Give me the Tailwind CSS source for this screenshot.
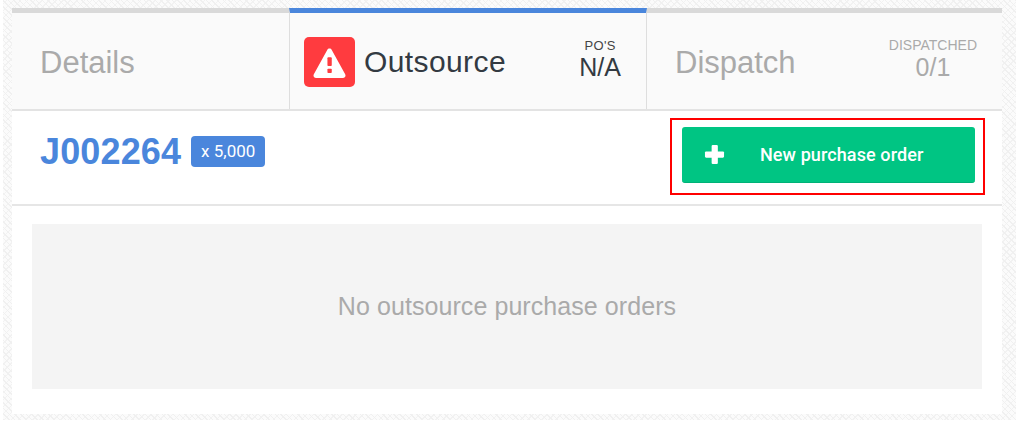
<!DOCTYPE html>
<html>
<head>
<meta charset="utf-8">
<script src="https://cdn.jsdelivr.net/npm/@tailwindcss/browser@4"></script>
</head>
<body class="bg-white font-['Liberation_Sans',Arial,sans-serif]">
<div class="w-[1016px] h-[431px] bg-white overflow-hidden">
  <div class="ml-[3px] h-[420px] pl-[9px] pr-[14px] pt-[8px] bg-[#fbfbfb] bg-[repeating-linear-gradient(45deg,#f0f0f0_0px,#f0f0f0_1px,transparent_1px,transparent_4px),repeating-linear-gradient(-45deg,#f2f2f2_0px,#f2f2f2_1px,transparent_1px,transparent_5px)]">
    <div class="w-[990px] h-[406px] bg-white flex flex-col">
      <div class="flex h-[103px] shrink-0 bg-[#fafafa] border-b-2 border-[#e3e3e3]">
        <div class="w-[277px] border-t-[5px] border-[#d9d9d9] flex items-center pl-[28px] pt-[5px] text-[31px] text-[#aaaaaa]">Details</div>
        <div class="w-[358px] border-t-[5px] border-t-[#4a86dc] border-x border-x-[#dedede] flex items-center pl-[14px] pr-[25px] pt-[1px]">
          <div class="w-[51px] h-[50px] mt-[1px] rounded-[5px] bg-[#ff3b3f] flex items-center justify-center">
            <svg viewBox="0 0 32 30" class="w-[33px] h-[31px]"><path d="M16 1.500c.9 0 1.700.5 2.200 1.300l13 23.600c.9 1.700-.2 3.600-2.200 3.600H3c-2 0-3.100-1.900-2.200-3.600l13-23.600c.5-.8 1.300-1.300 2.200-1.300z" fill="#fff"/><rect x="14" y="10" width="4.200" height="8.500" rx=".8" fill="#ff3b3f"/><rect x="14" y="21" width="4.200" height="4.200" rx=".8" fill="#ff3b3f"/></svg>
          </div>
          <div class="ml-[9px] text-[30px] text-[#333a42] tracking-[0.4px]">Outsource</div>
          <div class="ml-auto flex flex-col items-center mb-[2px]">
            <div class="text-[13px] leading-[13px] tracking-[0.3px] text-[#444444]">PO'S</div>
            <div class="text-[25px] leading-[30px] text-[#333a42]">N/A</div>
          </div>
        </div>
        <div class="w-[355px] border-t-[5px] border-[#d9d9d9] flex items-center pl-[28px] pr-[25px] pt-[1px]">
          <div class="text-[31px] text-[#aaaaaa] mt-[3px]">Dispatch</div>
          <div class="ml-auto flex flex-col items-center mb-[2px]">
            <div class="text-[14px] leading-[13px] text-[#aaaaaa]">DISPATCHED</div>
            <div class="text-[25px] leading-[30px] text-[#aaaaaa]">0/1</div>
          </div>
        </div>
      </div>
      <div class="flex h-[95px] shrink-0 border-b-2 border-[#e6e6e6]">
        <div class="pl-[28px] pt-[20px] flex items-start">
          <span class="text-[36px] leading-[42px] font-bold text-[#4a86dc] tracking-[0.15px]">J002264</span>
          <span class="ml-[10px] mt-[5px] h-[31px] w-[74px] rounded-[4px] bg-[#4a86dc] text-white text-[17px] font-['Roboto'] flex items-center justify-center">x 5,000</span>
        </div>
        <div class="ml-auto mr-[17px] mt-[7px] w-[315px] h-[77px] border-2 border-[#ff0000] pl-[10px] pt-[7px]">
          <button class="w-[293px] h-[56px] rounded-[3px] bg-[#00c583] border-b border-[#00b277] text-white flex items-center pl-[22px]">
            <svg viewBox="0 0 22 22" class="w-[21px] h-[21px]"><rect x="8" y="1" width="6.500" height="20" rx="1.200" fill="#fff"/><rect x="1" y="7.800" width="20" height="6.500" rx="1.200" fill="#fff"/></svg>
            <span class="ml-[35px] text-[18px] font-medium font-['Roboto'] tracking-[0.1px]">New purchase order</span>
          </button>
        </div>
      </div>
      <div class="px-[20px] pt-[18px]">
        <div class="h-[165px] bg-[#f4f4f4] flex items-center justify-center text-[25px] text-[#aaaaaa] tracking-[0.07px]">No outsource purchase orders</div>
      </div>
    </div>
  </div>
</div>
</body>
</html>
